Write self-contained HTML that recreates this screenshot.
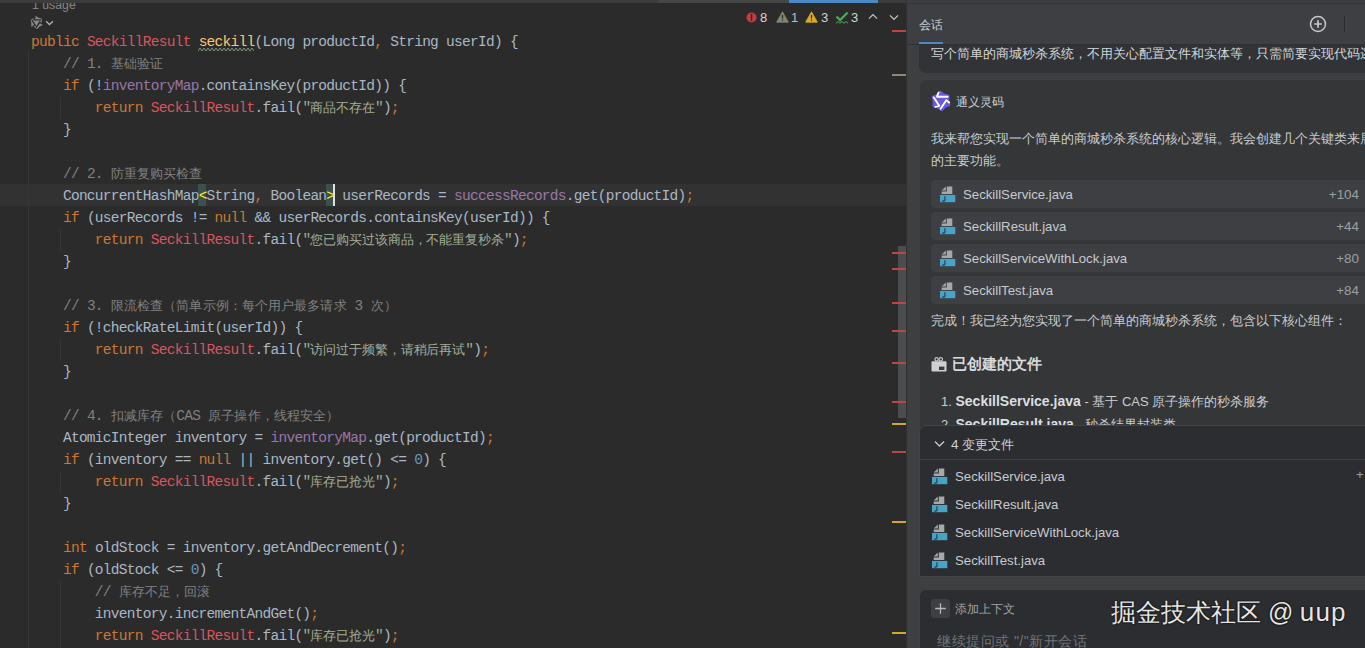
<!DOCTYPE html>
<html><head><meta charset="utf-8">
<style>
*{margin:0;padding:0;box-sizing:border-box}
html,body{width:1365px;height:648px;overflow:hidden;background:#2b2b2b}
body{position:relative;font-family:"Liberation Sans",sans-serif}
.abs{position:absolute}
#editor{position:absolute;left:0;top:4px;width:906px;height:644px;background:#2b2b2b;overflow:hidden}
.code{position:absolute;left:31px;top:27px;font-family:"Liberation Mono",monospace;font-size:14.5px;letter-spacing:-0.72px;line-height:22px;color:#a9b7c6}
.ln{height:22px;white-space:pre}
.z{font-size:13px;letter-spacing:-0.1px}
.cm .z{letter-spacing:0.1px}
.k{color:#cc7832}.c{color:#d9555e}.m{color:#ffc66d}.cm{color:#808080}.s{color:#a3ad98}.f{color:#9876aa}.n{color:#6897bb}.p{color:#cc7832}
#curline{position:absolute;left:0;top:180px;width:906px;height:22px;background:#323232}
.guide{position:absolute;width:1px;background:#363636}
.bm{color:#ffef28}
#caret{position:absolute;left:333px;top:180px;width:2px;height:22px;background:#e0e0e0}
.card{position:absolute;background:#343638}
.row{position:absolute;left:931px;width:440px;height:28px;background:#3d3f42;border-radius:4px}
.txt{position:absolute;white-space:nowrap;color:#c9cbce;font-size:13px}
.mk{position:absolute;left:892px;width:14px;height:2px;background:#bf4444}
.mk.y{background:#d6a52a}
</style></head><body>
<div id="editor">
<div id="curline"></div>
<div class="abs" style="left:198px;top:180px;width:8px;height:22px;background:#3b514d"></div>
<div class="abs" style="left:326px;top:180px;width:8px;height:22px;background:#3b514d"></div>
<div class="guide" style="left:28px;top:46px;height:598px"></div>
<div class="guide" style="left:60px;top:93px;height:22px"></div>
<div class="guide" style="left:60px;top:225px;height:22px"></div>
<div class="guide" style="left:60px;top:335px;height:22px"></div>
<div class="guide" style="left:60px;top:467px;height:22px"></div>
<div class="guide" style="left:60px;top:577px;height:68px"></div>
<div class="code">
<div class="ln"><span class="k">public </span><span class="c">SeckillResult </span><span class="m">seckill</span>(Long productId<span class="p">, </span>String userId) {</div>
<div class="ln">    <span class="cm">// 1. <span class="z">基础验证</span></span></div>
<div class="ln">    <span class="k">if </span>(!<span class="f">inventoryMap</span>.containsKey(productId)) {</div>
<div class="ln">        <span class="k">return </span><span class="c">SeckillResult</span>.fail(<span class="s">"<span class="z">商品不存在</span>"</span>)<span class="p">;</span></div>
<div class="ln">    }</div>
<div class="ln"> </div>
<div class="ln">    <span class="cm">// 2. <span class="z">防重复购买检查</span></span></div>
<div class="ln">    ConcurrentHashMap<span class="bm">&lt;</span>String<span class="p">, </span>Boolean<span class="bm">&gt;</span> userRecords = <span class="f">successRecords</span>.get(productId)<span class="p">;</span></div>
<div class="ln">    <span class="k">if </span>(userRecords != <span class="k">null </span>&amp;&amp; userRecords.containsKey(userId)) {</div>
<div class="ln">        <span class="k">return </span><span class="c">SeckillResult</span>.fail(<span class="s">"<span class="z">您已购买过该商品，不能重复秒杀</span>"</span>)<span class="p">;</span></div>
<div class="ln">    }</div>
<div class="ln"> </div>
<div class="ln">    <span class="cm">// 3. <span class="z">限流检查（简单示例：每个用户最多请求</span> 3 <span class="z">次）</span></span></div>
<div class="ln">    <span class="k">if </span>(!checkRateLimit(userId)) {</div>
<div class="ln">        <span class="k">return </span><span class="c">SeckillResult</span>.fail(<span class="s">"<span class="z">访问过于频繁，请稍后再试</span>"</span>)<span class="p">;</span></div>
<div class="ln">    }</div>
<div class="ln"> </div>
<div class="ln">    <span class="cm">// 4. <span class="z">扣减库存（</span>CAS <span class="z">原子操作，线程安全）</span></span></div>
<div class="ln">    AtomicInteger inventory = <span class="f">inventoryMap</span>.get(productId)<span class="p">;</span></div>
<div class="ln">    <span class="k">if </span>(inventory == <span class="k">null </span>|| inventory.get() &lt;= <span class="n">0</span>) {</div>
<div class="ln">        <span class="k">return </span><span class="c">SeckillResult</span>.fail(<span class="s">"<span class="z">库存已抢光</span>"</span>)<span class="p">;</span></div>
<div class="ln">    }</div>
<div class="ln"> </div>
<div class="ln">    <span class="k">int </span>oldStock = inventory.getAndDecrement()<span class="p">;</span></div>
<div class="ln">    <span class="k">if </span>(oldStock &lt;= <span class="n">0</span>) {</div>
<div class="ln">        <span class="cm">// <span class="z">库存不足，回滚</span></span></div>
<div class="ln">        inventory.incrementAndGet()<span class="p">;</span></div>
<div class="ln">        <span class="k">return </span><span class="c">SeckillResult</span>.fail(<span class="s">"<span class="z">库存已抢光</span>"</span>)<span class="p">;</span></div>
</div>

<div id="caret"></div>
</div>
<div class="txt" style="left:32px;top:-2px;font-size:12.3px;color:#858585">1 usage</div>
<svg class="abs" style="left:29px;top:15px" width="15" height="15" viewBox="0 0 24 24">
<path d="M11.22 3.03 L14.96 5.66 L19.37 6.84 L18.97 11.39 L20.16 15.80 L16.02 17.73 L12.78 20.97 L9.04 18.34 L4.63 17.16 L5.03 12.61 L3.84 8.20 L7.98 6.27 Z" fill="#8a8a8a" stroke="#8a8a8a" stroke-width="2.4" stroke-linejoin="round"/>
<path d="M9.6 3.6 L8 7.4 M8.2 7.8 L18.6 7.8 M4.9 8.4 L10.2 16.8 L6.4 17.9 M17.3 11.2 L11.6 19.8 M17.3 11.2 L20.2 13.6" stroke="#2b2b2b" stroke-width="2.2" fill="none" stroke-linecap="round" stroke-linejoin="round"/>
</svg>
<svg class="abs" style="left:45px;top:19px" width="9" height="8" viewBox="0 0 9 8"><path d="M1.2 2.3l3.3 3.3 3.3-3.3" stroke="#b8b8b8" stroke-width="1.3" fill="none"/></svg>
<svg class="abs" style="left:198px;top:47px" width="56" height="5" viewBox="0 0 56 5"><path d="M0 4 L2 1 L4 4 L6 1 L8 4 L10 1 L12 4 L14 1 L16 4 L18 1 L20 4 L22 1 L24 4 L26 1 L28 4 L30 1 L32 4 L34 1 L36 4 L38 1 L40 4 L42 1 L44 4 L46 1 L48 4 L50 1 L52 4 L54 1 L56 4" stroke="#7d9780" stroke-width="1" fill="none"/></svg>
<div class="abs" style="left:898px;top:246px;width:8px;height:172px;background:#4b4d4f"></div>
<div class="mk" style="top:30px"></div>
<div class="mk" style="top:252px"></div>
<div class="mk" style="top:268px"></div>
<div class="mk" style="top:302px"></div>
<div class="mk" style="top:330px"></div>
<div class="mk" style="top:362px"></div>
<div class="mk" style="top:401px"></div>
<div class="mk" style="top:451px"></div>
<div class="mk y" style="top:423px"></div>
<div class="mk y" style="top:521px"></div>
<div class="mk y" style="top:632px"></div>
<div class="mk" style="top:74px;background:#8c8b72"></div>
<svg class="abs" style="left:746px;top:12px" width="11" height="11" viewBox="0 0 11 11"><circle cx="5.5" cy="5.5" r="5" fill="#c73b3e"/><path d="M5.5 2.6v3.6" stroke="#2b2b2b" stroke-width="1.6" stroke-linecap="round"/><circle cx="5.5" cy="8" r="0.9" fill="#2b2b2b"/></svg>
<div class="txt" style="left:760px;top:10px;font-size:13px;color:#d4d4d4">8</div>
<svg class="abs" style="left:776px;top:11px" width="13" height="12" viewBox="0 0 13 12"><path d="M6.5 0.8L12.4 11.2H0.6z" fill="#85866f" stroke="#85866f" stroke-width="0.8" stroke-linejoin="round"/><path d="M6.5 4v3.6M6.5 8.6v1.2" stroke="#2b2b2b" stroke-width="1.3"/></svg>
<div class="txt" style="left:791px;top:10px;font-size:13px;color:#bdbdbd">1</div>
<svg class="abs" style="left:805px;top:11px" width="13" height="12" viewBox="0 0 13 12"><path d="M6.5 0.8L12.4 11.2H0.6z" fill="#dcaa22" stroke="#dcaa22" stroke-width="0.8" stroke-linejoin="round"/><path d="M6.5 4v3.6M6.5 8.6v1.2" stroke="#3a2b10" stroke-width="1.3"/></svg>
<div class="txt" style="left:821px;top:10px;font-size:13px;color:#d4d4d4">3</div>
<svg class="abs" style="left:835px;top:11px" width="14" height="13" viewBox="0 0 14 13"><path d="M1.5 5.5l3.6 3.6L12.6 1.4" stroke="#4ea95b" stroke-width="2.2" fill="none"/><path d="M1 12.2l2-1.6 2 1.6 2-1.6 2 1.6 2-1.6 2 1.6" stroke="#4ea95b" stroke-width="1" fill="none"/></svg>
<div class="txt" style="left:851px;top:10px;font-size:13px;color:#d4d4d4">3</div>
<svg class="abs" style="left:868px;top:13px" width="10" height="7" viewBox="0 0 10 7"><path d="M1 5.6l4-4 4 4" stroke="#c4c4c4" stroke-width="1.3" fill="none"/></svg>
<svg class="abs" style="left:889px;top:14px" width="10" height="7" viewBox="0 0 10 7"><path d="M1 1.4l4 4 4-4" stroke="#c4c4c4" stroke-width="1.3" fill="none"/></svg>
<div class="abs" style="left:0;top:0;width:906px;height:3px;background:#3c3c3c"></div>
<div class="abs" style="left:658px;top:0;width:131px;height:3px;background:#454747"></div>
<div class="abs" style="left:789px;top:0;width:89px;height:3px;background:#4b89c6"></div>
<div class="abs" style="left:906px;top:0;width:1px;height:648px;background:#2e2f31"></div>
<div class="abs" style="left:907px;top:0;width:458px;height:648px;background:#3d3f41"></div>
<div class="abs" style="left:907px;top:0;width:458px;height:3px;background:#3c3e41"></div>
<div class="abs" style="left:907px;top:3px;width:458px;height:1px;background:#333538"></div>
<div class="abs" style="left:907px;top:4px;width:458px;height:40px;background:#3d3f42"></div>
<div class="abs" style="left:907px;top:44px;width:458px;height:1px;background:#2e3033"></div>
<div class="txt" style="left:919px;top:17px;font-size:12px;color:#d0d2d5">会话</div>
<div class="abs" style="left:919px;top:42px;width:24px;height:2px;background:#4a88c7"></div>
<svg class="abs" style="left:1309px;top:15px" width="18" height="18" viewBox="0 0 18 18"><circle cx="9" cy="9" r="7.5" stroke="#c6c8ca" stroke-width="1.5" fill="none"/><path d="M9 5.2v7.6M5.2 9h7.6" stroke="#c6c8ca" stroke-width="1.7"/></svg>
<div class="abs" style="left:1344px;top:16px;width:1px;height:16px;background:#2a2c2e"></div>
<div class="card" style="left:919px;top:45px;width:460px;height:28px;border-radius:0 0 0 7px;background:#313336"></div>
<div class="txt" style="left:931px;top:45px;color:#d3d5d8">写个简单的商城秒杀系统，不用关心配置文件和实体等，只需简要实现代码逻辑</div>
<div class="card" style="left:920px;top:80px;width:460px;height:360px;border-radius:7px 0 0 0"></div>
<svg class="abs" style="left:929px;top:89px" width="24" height="24" viewBox="0 0 24 24">
<path d="M11.22 3.03 L14.96 5.66 L19.37 6.84 L18.97 11.39 L20.16 15.80 L16.02 17.73 L12.78 20.97 L9.04 18.34 L4.63 17.16 L5.03 12.61 L3.84 8.20 L7.98 6.27 Z" fill="#6a58e0" stroke="#6a58e0" stroke-width="2.4" stroke-linejoin="round"/>
<path d="M9.6 3.6 L8 7.4 M8.2 7.8 L18.6 7.8 M4.9 8.4 L10.2 16.8 L6.4 17.9 M17.3 11.2 L11.6 19.8 M17.3 11.2 L20.2 13.6" stroke="#ffffff" stroke-width="1.9" fill="none" stroke-linecap="round" stroke-linejoin="round"/>
</svg>
<div class="txt" style="left:956px;top:94px;font-size:12px;color:#cdd0d3">通义灵码</div>
<div class="txt" style="left:931px;top:130px">我来帮您实现一个简单的商城秒杀系统的核心逻辑。我会创建几个关键类来展示</div>
<div class="txt" style="left:931px;top:152px">的主要功能。</div>
<div class="row" style="top:180px"></div>
<svg class="abs" style="left:940px;top:186px" width="16" height="17" viewBox="0 0 16 17">
<path d="M1.7 4.6 L5.8 0.5 V4.6 Z" fill="#a6a8aa"/>
<path d="M6.8 0.5 H12.3 V8 H1.7 V5.5 H6.8 Z" fill="#a6a8aa"/>
<rect x="0" y="8.9" width="15.3" height="7.3" fill="#47a4c4"/>
<path d="M4.9 10.2 V13.9 Q4.9 15 3.9 15 H2.4" stroke="#1b4a66" stroke-width="1.3" fill="none"/>
</svg>
<div class="txt" style="left:963px;top:187px;font-size:13.2px;color:#c8cacd">SeckillService.java</div>
<div class="txt" style="left:1300px;width:59px;text-align:right;top:187px;font-size:13.4px;color:#9d9fa2">+104</div>
<div class="row" style="top:212px"></div>
<svg class="abs" style="left:940px;top:218px" width="16" height="17" viewBox="0 0 16 17">
<path d="M1.7 4.6 L5.8 0.5 V4.6 Z" fill="#a6a8aa"/>
<path d="M6.8 0.5 H12.3 V8 H1.7 V5.5 H6.8 Z" fill="#a6a8aa"/>
<rect x="0" y="8.9" width="15.3" height="7.3" fill="#47a4c4"/>
<path d="M4.9 10.2 V13.9 Q4.9 15 3.9 15 H2.4" stroke="#1b4a66" stroke-width="1.3" fill="none"/>
</svg>
<div class="txt" style="left:963px;top:219px;font-size:13.2px;color:#c8cacd">SeckillResult.java</div>
<div class="txt" style="left:1300px;width:59px;text-align:right;top:219px;font-size:13.4px;color:#9d9fa2">+44</div>
<div class="row" style="top:244px"></div>
<svg class="abs" style="left:940px;top:250px" width="16" height="17" viewBox="0 0 16 17">
<path d="M1.7 4.6 L5.8 0.5 V4.6 Z" fill="#a6a8aa"/>
<path d="M6.8 0.5 H12.3 V8 H1.7 V5.5 H6.8 Z" fill="#a6a8aa"/>
<rect x="0" y="8.9" width="15.3" height="7.3" fill="#47a4c4"/>
<path d="M4.9 10.2 V13.9 Q4.9 15 3.9 15 H2.4" stroke="#1b4a66" stroke-width="1.3" fill="none"/>
</svg>
<div class="txt" style="left:963px;top:251px;font-size:13.2px;color:#c8cacd">SeckillServiceWithLock.java</div>
<div class="txt" style="left:1300px;width:59px;text-align:right;top:251px;font-size:13.4px;color:#9d9fa2">+80</div>
<div class="row" style="top:276px"></div>
<svg class="abs" style="left:940px;top:282px" width="16" height="17" viewBox="0 0 16 17">
<path d="M1.7 4.6 L5.8 0.5 V4.6 Z" fill="#a6a8aa"/>
<path d="M6.8 0.5 H12.3 V8 H1.7 V5.5 H6.8 Z" fill="#a6a8aa"/>
<rect x="0" y="8.9" width="15.3" height="7.3" fill="#47a4c4"/>
<path d="M4.9 10.2 V13.9 Q4.9 15 3.9 15 H2.4" stroke="#1b4a66" stroke-width="1.3" fill="none"/>
</svg>
<div class="txt" style="left:963px;top:283px;font-size:13.2px;color:#c8cacd">SeckillTest.java</div>
<div class="txt" style="left:1300px;width:59px;text-align:right;top:283px;font-size:13.4px;color:#9d9fa2">+84</div>
<div class="txt" style="left:931px;top:312px">完成！我已经为您实现了一个简单的商城秒杀系统，包含以下核心组件：</div>
<div class="txt" style="left:952px;top:355px;font-size:15px;font-weight:bold;color:#d8dadd">已创建的文件</div>
<svg class="abs" style="left:931px;top:357px" width="16" height="15" viewBox="0 0 16 15"><circle cx="5.6" cy="2.3" r="1.7" stroke="#c9c9c9" stroke-width="1.1" fill="none"/><circle cx="9.8" cy="2.3" r="1.7" stroke="#c9c9c9" stroke-width="1.1" fill="none"/><rect x="0.5" y="4.2" width="15" height="10.3" rx="0.8" fill="#d0d0d0"/><rect x="8" y="9.6" width="5.4" height="3.4" fill="#3a3c3f"/></svg>
<div class="txt" style="left:941px;top:393px;color:#cbcdd0">1. <b style="color:#dcdee1;font-size:14px">SeckillService.java</b> - 基于 CAS 原子操作的秒杀服务</div>
<div class="txt" style="left:941px;top:416px;color:#cbcdd0">2. <b style="color:#dcdee1;font-size:14px">SeckillResult.java</b> - 秒杀结果封装类</div>
<div class="abs" style="left:919px;top:425px;width:450px;height:152px;background:#2b2d30;border:1px solid #424447;border-radius:7px 0 0 0"></div>
<svg class="abs" style="left:934px;top:440px" width="11" height="8" viewBox="0 0 11 8"><path d="M1 1.5l4.5 4.5 4.5-4.5" stroke="#c8cacd" stroke-width="1.3" fill="none"/></svg>
<div class="txt" style="left:951px;top:436px;color:#cdd0d3"><span style="font-size:13.5px">4 </span>变更文件</div>
<div class="abs" style="left:919px;top:459px;width:446px;height:1px;background:#3b3d40"></div>
<svg class="abs" style="left:932px;top:468px" width="16" height="17" viewBox="0 0 16 17">
<path d="M1.7 4.6 L5.8 0.5 V4.6 Z" fill="#a6a8aa"/>
<path d="M6.8 0.5 H12.3 V8 H1.7 V5.5 H6.8 Z" fill="#a6a8aa"/>
<rect x="0" y="8.9" width="15.3" height="7.3" fill="#47a4c4"/>
<path d="M4.9 10.2 V13.9 Q4.9 15 3.9 15 H2.4" stroke="#1b4a66" stroke-width="1.3" fill="none"/>
</svg>
<div class="txt" style="left:955px;top:469px;font-size:13.2px;color:#c8cacd">SeckillService.java</div>
<svg class="abs" style="left:932px;top:496px" width="16" height="17" viewBox="0 0 16 17">
<path d="M1.7 4.6 L5.8 0.5 V4.6 Z" fill="#a6a8aa"/>
<path d="M6.8 0.5 H12.3 V8 H1.7 V5.5 H6.8 Z" fill="#a6a8aa"/>
<rect x="0" y="8.9" width="15.3" height="7.3" fill="#47a4c4"/>
<path d="M4.9 10.2 V13.9 Q4.9 15 3.9 15 H2.4" stroke="#1b4a66" stroke-width="1.3" fill="none"/>
</svg>
<div class="txt" style="left:955px;top:497px;font-size:13.2px;color:#c8cacd">SeckillResult.java</div>
<svg class="abs" style="left:932px;top:524px" width="16" height="17" viewBox="0 0 16 17">
<path d="M1.7 4.6 L5.8 0.5 V4.6 Z" fill="#a6a8aa"/>
<path d="M6.8 0.5 H12.3 V8 H1.7 V5.5 H6.8 Z" fill="#a6a8aa"/>
<rect x="0" y="8.9" width="15.3" height="7.3" fill="#47a4c4"/>
<path d="M4.9 10.2 V13.9 Q4.9 15 3.9 15 H2.4" stroke="#1b4a66" stroke-width="1.3" fill="none"/>
</svg>
<div class="txt" style="left:955px;top:525px;font-size:13.2px;color:#c8cacd">SeckillServiceWithLock.java</div>
<svg class="abs" style="left:932px;top:552px" width="16" height="17" viewBox="0 0 16 17">
<path d="M1.7 4.6 L5.8 0.5 V4.6 Z" fill="#a6a8aa"/>
<path d="M6.8 0.5 H12.3 V8 H1.7 V5.5 H6.8 Z" fill="#a6a8aa"/>
<rect x="0" y="8.9" width="15.3" height="7.3" fill="#47a4c4"/>
<path d="M4.9 10.2 V13.9 Q4.9 15 3.9 15 H2.4" stroke="#1b4a66" stroke-width="1.3" fill="none"/>
</svg>
<div class="txt" style="left:955px;top:553px;font-size:13.2px;color:#c8cacd">SeckillTest.java</div>
<div class="txt" style="left:1356px;top:467px;font-size:13.4px;color:#9d9fa2">+</div>
<div class="abs" style="left:919px;top:589px;width:450px;height:62px;background:#2b2d30;border:1px solid #3f4144;border-radius:7px 0 0 0"></div>
<div class="abs" style="left:931px;top:599px;width:19px;height:19px;background:#3d3f42;border-radius:3px"></div>
<svg class="abs" style="left:931px;top:599px" width="19" height="19" viewBox="0 0 19 19"><path d="M9.5 4.2v10.6M4.2 9.5h10.6" stroke="#b6b8bb" stroke-width="1.3"/></svg>
<div class="txt" style="left:955px;top:601px;font-size:12px;color:#a2a4a7">添加上下文</div>
<div class="txt" style="left:937px;top:633px;font-size:14px;letter-spacing:0.5px;color:#717376">继续提问或 "/"新开会话</div>
<div class="txt" style="left:1111px;top:596px;font-size:25px;color:#e6e6e6;text-shadow:0 0 2px #000,0 0 1px #000">掘金技术社区 <span style="letter-spacing:-0.5px">@</span> <span style="letter-spacing:1.2px;font-size:26px">uup</span></div>
</body></html>
